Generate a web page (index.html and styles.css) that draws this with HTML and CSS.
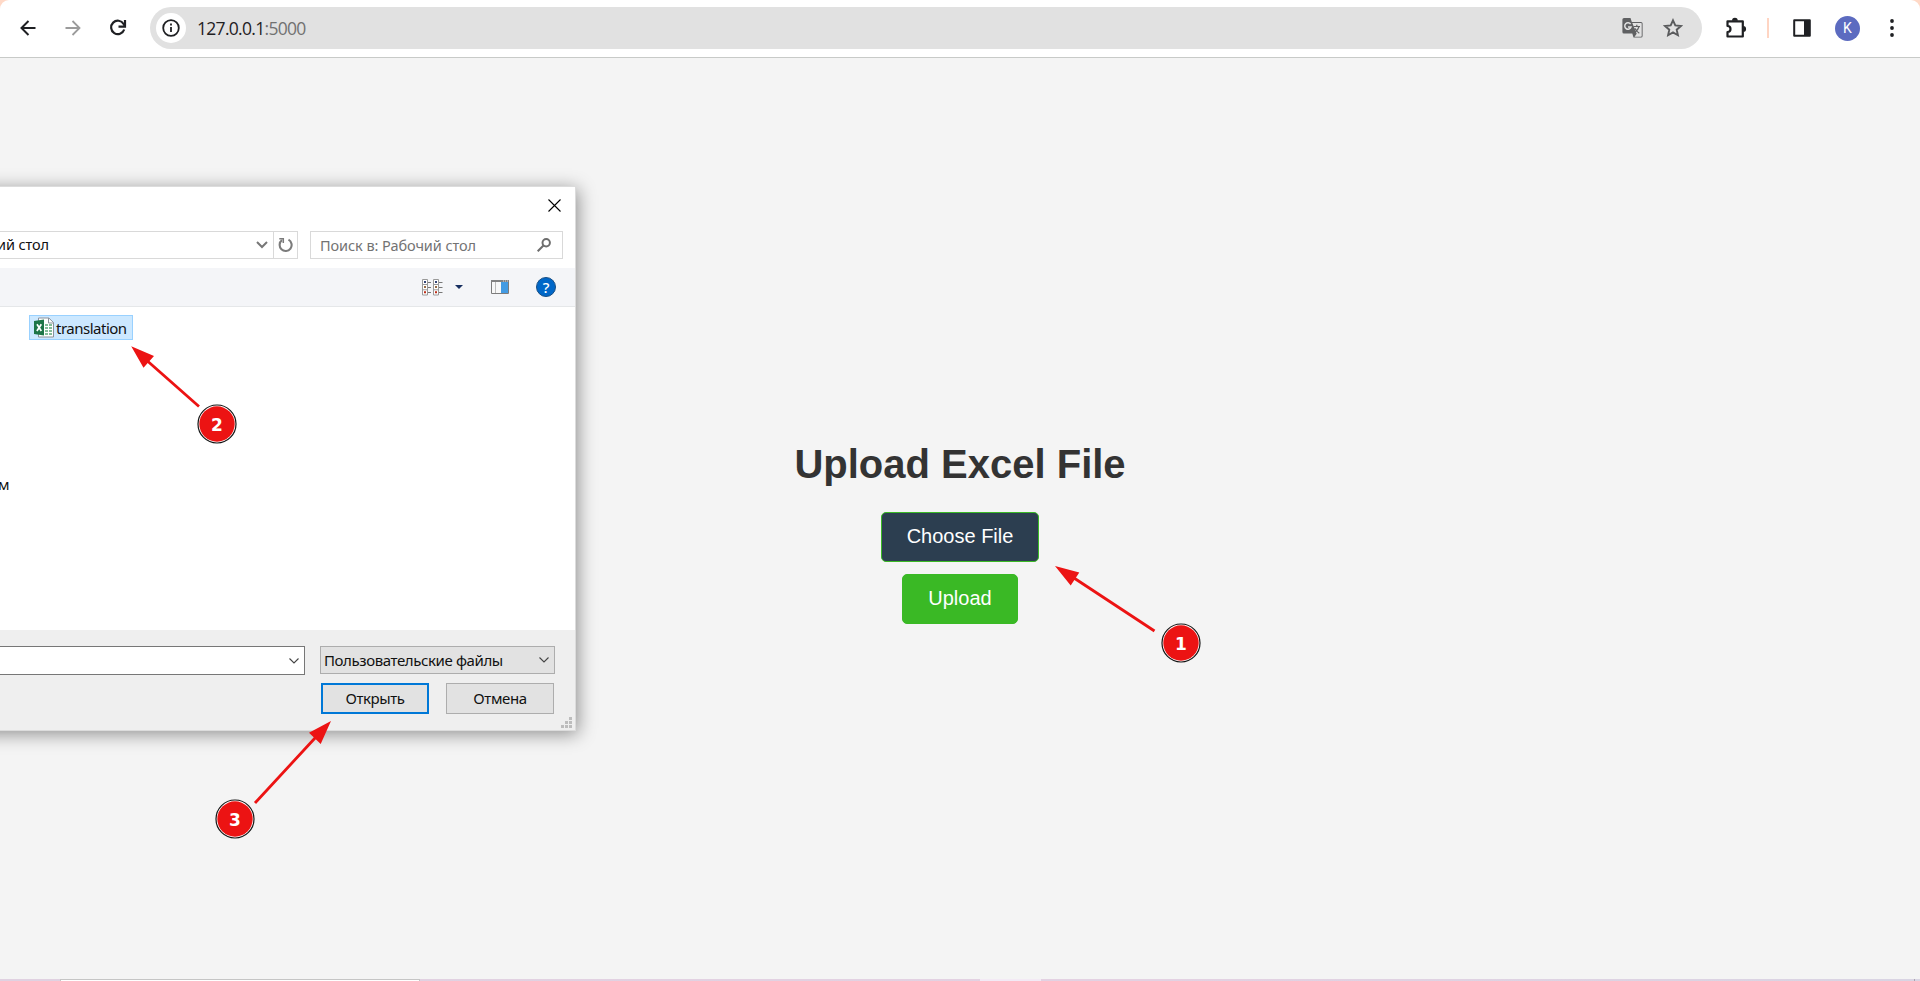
FILE: index.html
```html
<!DOCTYPE html>
<html lang="en">
<head>
<meta charset="utf-8">
<title>Upload Excel File</title>
<link rel="stylesheet" href="styles.css">
</head>
<body>
<div class="screen">
  <header class="browser-bar">
    <div class="nav">
      <svg width="18" height="18" viewBox="0 0 18 18" fill="none" stroke="#1f2023" stroke-width="2"><path d="M16.5 9H3M9.5 2L2.5 9l7 7"/></svg>
      <svg width="18" height="18" viewBox="0 0 18 18" fill="none" stroke="#9b9b9b" stroke-width="1.8"><path d="M1.5 9H15M8.5 2l7 7-7 7"/></svg>
      <svg width="18" height="18" viewBox="0 0 18 18" fill="none" stroke="#1f2023" stroke-width="2.2"><path d="M15.2 10.5A6.7 6.7 0 1 1 14.6 5L15.8 6.8"/><path d="M16 1v6.6H9.5"/></svg>
    </div>
    <div class="omnibox">
      <span class="site-info">
        <svg width="18" height="18" viewBox="0 0 18 18" fill="none" stroke="#1f2023" stroke-width="1.8"><circle cx="9" cy="9" r="7.8"/><path d="M9 8v5M9 4.6v2"/></svg>
      </span>
      <span class="url">127.0.0.1<span class="port">:5000</span></span>
      <svg class="translate" width="22" height="22" viewBox="0 0 22 22"><path d="M2 1h6.5l1.3 4H19a1.6 1.6 0 0 1 1.6 1.6V19a1.6 1.6 0 0 1-1.6 1.600h-7.500l-1.200-4H2A1.600 1.600 0 0 1 .4 15V2.600A1.600 1.600 0 0 1 2 1z" fill="#5f6062"/><path d="M10.300 6H19a.7.7 0 0 1 .7.7V19a.7.7 0 0 1-.7.7h-6.500l2.200-3z" fill="#e1e1e1"/><path d="M8.600 7.200A3.200 3.200 0 1 0 9 10H6" fill="none" stroke="#e1e1e1" stroke-width="1.500"/><path d="M11.500 9.500H18M14.800 7.800v1.700M17 9.500c-.7 2.800-2.400 4.700-4 5.800M12.800 11.300c1 2 2.500 3.700 4.500 5" fill="none" stroke="#5f6062" stroke-width="1.200"/></svg>
      <svg class="star" width="20" height="20" viewBox="0 0 20 20" fill="none" stroke="#5a5b5d" stroke-width="1.900"><path d="M10 2.300l2.300 5.100 5.600.6-4.200 3.700 1.200 5.500L10 14.400l-4.900 2.800 1.200-5.500L2.100 8l5.600-.6z"/></svg>
    </div>
    <svg class="puzzle" width="22" height="22" viewBox="0 0 22 22"><path d="M2.500 4.300h15.300v15.200H2.500V15a3 3 0 0 0 0-6z" fill="none" stroke="#1f2023" stroke-width="2.200" stroke-linejoin="round"/><path d="M7 3.700a2.900 2.900 0 0 1 5.800 0zM18.200 9a2.900 2.900 0 0 1 0 5.800z" fill="#1f2023"/></svg>
    <span class="bar-divider"></span>
    <svg class="panel" width="18" height="18" viewBox="0 0 18 18"><path d="M1.200 1.200h15.600v15.600H1.200z" fill="none" stroke="#1f2023" stroke-width="2" stroke-linejoin="round"/><path d="M11 1h6v16h-6z" fill="#1f2023"/></svg>
    <span class="avatar">K</span>
    <svg class="dots" width="4" height="18" viewBox="0 0 4 18" fill="#1f2023"><circle cx="2" cy="2" r="1.900"/><circle cx="2" cy="9" r="1.900"/><circle cx="2" cy="16" r="1.900"/></svg>
  </header>

  <main class="page">
    <h1>Upload Excel File</h1>
    <button class="btn choose">Choose File</button>
    <button class="btn upload">Upload</button>
  </main>

  <footer class="taskbar"><span class="task-search"></span><span class="task-active"></span><span class="task-end"></span></footer>

  <section class="dialog">
    <div class="titlebar">
      <svg width="13" height="13" viewBox="0 0 13 13" stroke="#000" stroke-width="1.100"><path d="M.5.5l12 12M12.500.5l-12 12"/></svg>
    </div>
    <div class="location">
      <div class="address"><span class="address-text">ий стол</span>
        <svg width="12" height="8" viewBox="0 0 12 8" fill="none" stroke="#777" stroke-width="2"><path d="M1 1l5 5 5-5"/></svg>
      </div>
      <div class="refresh"><svg width="15" height="16" viewBox="0 0 15 16" fill="none" stroke="#7b7b7b" stroke-width="2.100"><path d="M10.500 2.700A6 6 0 1 1 4 3.200"/><path d="M1.300 1.800h4v4.300" stroke-width="1.500"/></svg></div>
      <div class="search"><span>Поиск в: Рабочий стол</span>
        <svg width="14" height="14" viewBox="0 0 14 14" fill="none" stroke="#6d6d6d" stroke-width="2"><circle cx="9.200" cy="4.800" r="3.700"/><path d="M6.500 7.500L.7 13.300"/></svg>
      </div>
    </div>
    <div class="tools">
      <svg width="21" height="17" viewBox="0 0 21 17">
        <g fill="#fff" stroke="#999"><path d="M.5.5h5v15.500h-5zM.5 5.500h5M.5 10.800h5M11.500.5h5v15.500h-5zM11.500 5.500h5M11.500 10.800h5"/></g>
        <path d="M6 3.500h3M6 8.500h3M6 13.500h3M17 3.500h3.500M17 8.500h3.500M17 13.500h3.500" stroke="#777"/>
        <path d="M2 2h2v2H2zM13 2h2v2h-2z" fill="#347"/><path d="M2 7h2v2H2zM13 7h2v2h-2z" fill="#976b45"/><path d="M2 12.300h2v2H2zM13 12.300h2v2h-2z" fill="#bd2c18"/>
      </svg>
      <svg class="caret" width="8" height="4" viewBox="0 0 8 4"><path d="M0 0h8L4 4z" fill="#172f60"/></svg>
      <svg class="preview" width="18" height="14" viewBox="0 0 18 14"><path d="M.5.500h17v13H.5z" fill="#f8f8f8" stroke="#7c7c7c"/><path d="M0 0h18v2H0z" fill="#828282"/><path d="M12 1h1M14 1h1M16 1h1" stroke="#ddd"/><path d="M4.500 2v11" stroke="#bbb"/><path d="M10 2h7v11h-7z" fill="#439be3"/></svg>
      <span class="help">?</span>
    </div>
    <div class="files">
      <div class="file">
        <svg width="20" height="21" viewBox="0 0 20 21"><path d="M4.500 1h10.300l4.700 4.500V20h-15z" fill="#fff" stroke="#8b929b"/><path d="M14.500 1v5h5" fill="none" stroke="#8b929b"/><path d="M11 7h3v2h-3zM15 7h3v2h-3zM11 10h3v2h-3zM15 10h3v2h-3zM11 13h3v2h-3zM15 13h3v2h-3zM11 16h3v2h-3zM15 16h3v2h-3z" fill="#83bd99"/><path d="M0 4l10-1.500v16L0 17z" fill="#1d7547"/><path d="M3 7.200l4.300 6.800M7.300 7.200L2.900 14" stroke="#fff" stroke-width="1.700"/></svg>
        <span>translation</span>
      </div>
      <div class="file-partial">м</div>
    </div>
    <div class="actions">
      <div class="row">
        <div class="filename"><svg width="10" height="6" viewBox="0 0 10 6" fill="none" stroke="#444" stroke-width="1.100"><path d="M.5.5L5 5 9.500.5"/></svg></div>
        <div class="filter"><span>Пользовательские файлы</span><svg width="10" height="6" viewBox="0 0 10 6" fill="none" stroke="#444" stroke-width="1.100"><path d="M.5.5L5 5 9.500.5"/></svg></div>
      </div>
      <div class="row buttons">
        <div class="dlg-btn primary">Открыть</div>
        <div class="dlg-btn">Отмена</div>
      </div>
      <svg class="grip" width="11" height="11" viewBox="0 0 11 11" fill="#bdbdbd"><path d="M8 0h3v3H8zM4 4h3v3H4zM8 4h3v3H8zM0 8h3v3H0zM4 8h3v3H4zM8 8h3v3H8z"/></svg>
    </div>
  </section>

  <svg class="notes" width="1920" height="981" viewBox="0 0 1920 981">
    <g stroke="#ec1313" stroke-width="2.800"><path d="M148 361.500L199 406.500M1074 578L1154.500 631M315.500 737.500L255 803"/></g>
    <path fill="#ec1313" d="M131.200 346.300L154 356l-10.500 11.700zM1055 566l24.300 6.500-8.600 13zM331 721l-10.300 23L309 732.800z"/>
    <g class="badge"><circle cx="217" cy="424" r="19"/><circle cx="217" cy="424" r="17.700"/><text x="217" y="430.500">2</text></g>
    <g class="badge"><circle cx="1181" cy="643" r="19"/><circle cx="1181" cy="643" r="17.700"/><text x="1181" y="649.500">1</text></g>
    <g class="badge"><circle cx="235" cy="819" r="19"/><circle cx="235" cy="819" r="17.700"/><text x="235" y="825.500">3</text></g>
  </svg>
</div>
</body>
</html>
```
FILE: styles.css
```css
* { box-sizing: border-box; }
body { margin: 0; background: #f4f4f4; font-family: "Noto Sans", "Open Sans", sans-serif; }
svg { display: block; flex: none; }
.screen { position: relative; height: 981px; display: flex; flex-direction: column; overflow: hidden; background: #ffd9c7; }

.browser-bar { height: 58px; flex: none; display: flex; align-items: center; background: #fff; border-bottom: 1px solid #c8cac8; border-radius: 9px 9px 0 0; padding: 0 21px 1px 18px; }
.nav { display: flex; gap: 27px; width: 132px; padding-left: 1px; }
.omnibox { width: 1552px; height: 42px; border-radius: 21px; background: #e1e1e1; display: flex; align-items: center; padding: 0 19px 0 6px; }
.site-info { width: 30px; height: 30px; border-radius: 50%; background: #fff; display: flex; align-items: center; justify-content: center; }
.url { margin-left: 11px; font-family: "Open Sans", sans-serif; font-size: 17.5px; letter-spacing: -0.7px; color: #1f2023; flex: 1; white-space: nowrap; }
.port { color: #717171; }
.star { margin-left: 19px; }
.puzzle { margin-left: 23px; }
.bar-divider { width: 2px; height: 20px; background: #ffd5c3; margin-left: 20px; }
.panel { margin-left: 24px; }
.avatar { width: 25px; height: 25px; border-radius: 50%; background: #5c6bc0; color: #fff; font: 14px/25px Roboto, sans-serif; text-align: center; margin-left: 24px; }
.dots { margin-left: auto; margin-right: 5px; }

.page { flex: 1; background: #f4f4f4; display: flex; flex-direction: column; align-items: center; padding-top: 383px; font-family: "Liberation Sans", Arial, sans-serif; }
h1 { margin: 0 0 25px; font-size: 40px; line-height: 46px; color: #333; }
.btn { display: block; height: 50px; border: 1px solid #3ab925; border-radius: 5px; font: 20px/23px "Liberation Sans", Arial, sans-serif; color: #fff; padding: 0 0 1px; margin: 0 0 12px; }
.choose { width: 158px; background: #2c3e50; padding-bottom: 2px; }
.upload { width: 116px; background: #3ab925; }

.taskbar { height: 2px; flex: none; display: flex; background: linear-gradient(90deg, #e0d1e1, #e3d1e2 60%, #d9d4e3); }
.task-search { width: 360px; margin-left: 60px; background: #fff; border: 1px solid #c5c5c5; border-bottom: 0; }
.task-active { width: 61px; margin-left: 560px; background: #f3eaf5; }
.task-end { width: 1px; margin-left: 873px; background: #aaa4b0; }

/* The dialog continues past the left edge of the screen. */
.dialog { position: absolute; left: -30px; top: 186px; width: 606px; height: 545px; background: linear-gradient(#fff 444px, #efefef 444px); border: 1px solid #dcdcdc; box-shadow: 2px 3px 17px rgba(0,0,0,.42); display: flex; flex-direction: column; font-size: 15px; color: #111; padding-left: 29px; }
.titlebar { height: 44px; display: flex; justify-content: flex-end; padding: 12px 14px 0; }
.location { height: 37px; display: flex; align-items: flex-start; }
.address, .refresh, .search { height: 28px; border: 1px solid #d9d9d9; display: flex; align-items: center; justify-content: space-between; }
.address { width: 274px; border-left: 0; padding-right: 5px; }
.address-text { margin: -3px 0 0 -3px; font-size: 14.5px; letter-spacing: -0.1px; }
.refresh { width: 24px; border-left: 0; justify-content: center; }
.search { width: 253px; margin-left: 12px; padding: 0 11px 0 9px; color: #737373; font-size: 14.5px; letter-spacing: -0.07px; }
.tools { height: 39px; background: #f4f5f8; border-bottom: 1px solid #e5e7e9; display: flex; align-items: center; padding-left: 422px; }
.caret { margin-left: 12px; }
.preview { margin-left: 28px; }
.help { width: 20px; height: 20px; border-radius: 50%; background: #0067c8; border: 1px solid #174e84; color: #fff; font-size: 15px; line-height: 18px; font-weight: 500; text-align: center; margin-left: 27px; }
.files { height: 323px; padding: 8px 0 0 29px; }
.file { width: 104px; height: 25px; background: #cce8ff; border: 1px solid #99d1ff; display: flex; align-items: center; padding-left: 4px; }
.file span { margin-left: 2px; font-size: 15px; letter-spacing: -0.5px; line-height: 20px; padding-top: 1px; white-space: nowrap; }
.file-partial { margin: 134px 0 0 -31px; font-size: 15px; line-height: 20px; }
.actions { flex: 1; position: relative; background: #efefef; padding-top: 16px; }
.row { display: flex; align-items: flex-start; height: 37px; }
.filename { width: 305px; height: 29px; background: #fff; border: 1px solid #777; border-left: 0; display: flex; align-items: center; justify-content: flex-end; padding-right: 5px; }
.filter { width: 235px; height: 28px; margin-left: 15px; background: #e2e2e2; border: 1px solid #adadad; display: flex; align-items: center; justify-content: space-between; padding: 0 5px 0 3px; white-space: nowrap; letter-spacing: -0.4px; }
.buttons { padding-left: 321px; gap: 17px; }
.dlg-btn { width: 108px; height: 31px; background: #e2e2e2; border: 1px solid #adadad; display: flex; align-items: center; justify-content: center; padding-bottom: 2px; letter-spacing: -0.4px; }
.primary { border: 2px solid #0078d7; }
.grip { position: absolute; right: 3px; bottom: 2px; }

.notes { position: absolute; left: 0; top: 0; }
.badge circle { fill: #fff; stroke: #151515; stroke-width: 1.2px; }
.badge circle + circle { fill: #ec1313; stroke: none; }
.badge text { fill: #fff; font: bold 17px "DejaVu Sans", sans-serif; text-anchor: middle; }
```
